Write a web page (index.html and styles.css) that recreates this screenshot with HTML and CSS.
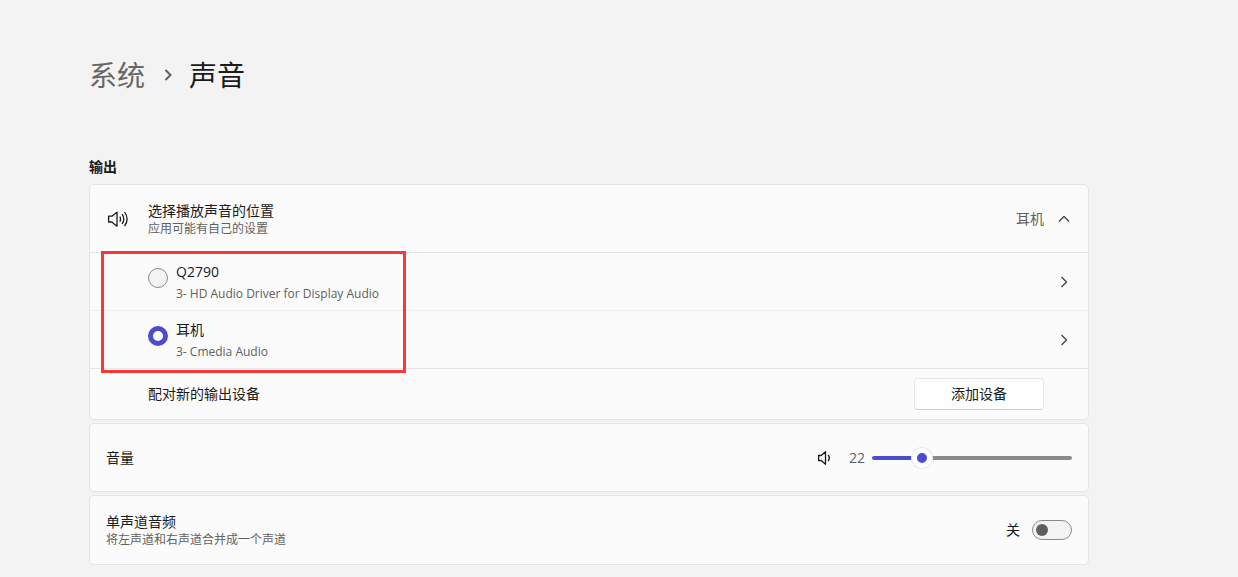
FILE: index.html
```html
<!DOCTYPE html>
<html lang="zh-CN">
<head>
<meta charset="utf-8">
<title>系统 › 声音</title>
<link rel="stylesheet" href="styles.css">
</head>
<body>
<main class="page">
  <h1 class="crumbs">
    <a class="crumb-parent" href="#">系统</a>
    <svg class="crumb-arrow" width="10" height="14" viewBox="0 0 10 14" aria-hidden="true"><path d="M2.500 2l5 5-5 5"/></svg>
    <span>声音</span>
  </h1>

  <h2 class="section-title">输出</h2>

  <div class="cards">
    <section class="card">
      <div class="row row-head">
        <svg class="icon icon-dark head-icon" width="24" height="20" viewBox="0 0 24 20" aria-hidden="true"><path d="M2.600 7.200h3.200L11 3.200v14L5.800 13H2.600zM13.800 7.600q1.500 2.500 0 5M16.200 5.200q3.200 4.900 0 9.800M18.600 3q5 7.100 0 14.200"/></svg>
        <div class="label">
          <span class="title">选择播放声音的位置</span>
          <span class="note">应用可能有自己的设置</span>
        </div>
        <span class="value">耳机</span>
        <button class="chevron" type="button" aria-label="收起"><svg class="icon" width="16" height="16" viewBox="0 0 16 16"><path d="M3 10.500l5-5 5 5"/></svg></button>
      </div>

      <div class="devices">
        <div class="row row-device">
          <input class="radio" type="radio" name="device" id="device-1">
          <label class="device" for="device-1">
            <span class="title">Q2790</span>
            <span class="detail">3- HD Audio Driver for Display Audio</span>
          </label>
          <button class="chevron" type="button" aria-label="Q2790 属性"><svg class="icon" width="16" height="16" viewBox="0 0 16 16"><path d="M5.500 3l5 5-5 5"/></svg></button>
        </div>
        <div class="row row-device">
          <input class="radio" type="radio" name="device" id="device-2" checked>
          <label class="device" for="device-2">
            <span class="title">耳机</span>
            <span class="detail">3- Cmedia Audio</span>
          </label>
          <button class="chevron" type="button" aria-label="耳机 属性"><svg class="icon" width="16" height="16" viewBox="0 0 16 16"><path d="M5.500 3l5 5-5 5"/></svg></button>
        </div>
        <div class="highlight"></div>
      </div>

      <div class="row row-pair">
        <span class="title">配对新的输出设备</span>
        <button class="button" type="button">添加设备</button>
      </div>
    </section>

    <section class="card">
      <div class="row row-volume">
        <label class="title" for="volume">音量</label>
        <button class="mute" type="button" aria-label="静音"><svg class="icon icon-dark" width="16" height="16" viewBox="0 0 16 16"><path d="M2.600 5.500h2.600L9.500 1.700v12.600L5.200 10.500H2.600zM12 5q2.800 3 0 6"/></svg></button>
        <output class="number" for="volume">22</output>
        <input class="slider" type="range" id="volume" min="0" max="100" value="22">
      </div>
    </section>

    <section class="card">
      <div class="row row-mono">
        <label class="label" for="mono">
          <span class="title">单声道音频</span>
          <span class="note">将左声道和右声道合并成一个声道</span>
        </label>
        <span class="state">关</span>
        <input class="switch" type="checkbox" role="switch" id="mono">
      </div>
    </section>
  </div>
</main>
</body>
</html>
```

FILE: styles.css
```css
* {
  box-sizing: border-box;
}

body {
  margin: 0;
  background: #f3f3f3;
  color: #1a1a1a;
  font: 14px/20px "Open Sans", "Noto Sans CJK SC", sans-serif;
}

.page {
  max-width: 1178px;
  padding: 55px 89px 12px;
}

.crumbs {
  display: flex;
  align-items: center;
  margin: 0;
  font-size: 28px;
  line-height: 40px;
  font-weight: 400;
}

.crumb-parent {
  color: #666;
  text-decoration: none;
}

.crumb-arrow {
  margin: 0 16px 0 18px;
  fill: none;
  stroke: #606060;
  stroke-width: 2;
}

.section-title {
  margin: 62px 0 7px;
  font-size: 14px;
  line-height: 20px;
  font-weight: 600;
}

.cards {
  display: flex;
  flex-direction: column;
  gap: 3px;
}

.card {
  border: 1px solid #e5e5e5;
  border-radius: 5px;
  background: #fbfbfb;
}

.row {
  display: flex;
  align-items: center;
  padding: 0 16px;
}

.row-head {
  min-height: 68px;
  border-bottom: 1px solid #e5e5e5;
}

.head-icon {
  margin-right: 18px;
}

.label {
  display: flex;
  flex-direction: column;
}

.title {
  font-size: 14px;
  line-height: 20px;
}

.note {
  color: #606060;
  font-size: 12px;
  line-height: 16px;
}

.value {
  margin-left: auto;
  margin-right: 12px;
  color: #606060;
}

.icon {
  display: block;
  fill: none;
  stroke: #404040;
  stroke-width: 1.300;
  stroke-linejoin: round;
}

.icon-dark {
  stroke: #1a1a1a;
}

.chevron,
.mute {
  padding: 0;
  border: 0;
  background: none;
}

.devices {
  position: relative;
}

.row-device {
  min-height: 58px;
  padding-left: 58px;
  border-bottom: 1px solid #f0f0f0;
}

.row-device:nth-child(2) {
  border-bottom-color: #e5e5e5;
}

.radio {
  appearance: none;
  align-self: flex-start;
  width: 20px;
  height: 20px;
  margin: 15px 8px 0 0;
  border: 1px solid #8a8a8a;
  border-radius: 50%;
  background: #f3f3f3;
}

.radio:checked {
  border: 5px solid #4f4bcf;
  background: #fff;
}

.device {
  display: flex;
  flex: 1;
  flex-direction: column;
  gap: 4px;
}

.detail {
  color: #606060;
  font-size: 12px;
  line-height: 16px;
}

.highlight {
  position: absolute;
  top: -2px;
  bottom: -4px;
  left: 11px;
  width: 305px;
  border: 3px solid #fc3636;
  pointer-events: none;
}

.row-pair {
  min-height: 50px;
  justify-content: space-between;
  padding-left: 58px;
  padding-right: 44px;
}

.button {
  width: 130px;
  height: 32px;
  border: 1px solid #e8e8e8;
  border-bottom-color: #d0d0d0;
  border-radius: 4px;
  background: #fefefe;
  color: #1a1a1a;
  font: inherit;
}

.row-volume {
  min-height: 67px;
}

.row-mono {
  min-height: 68px;
}

.mute {
  margin-left: auto;
}

.number {
  width: 33px;
  margin-right: 7px;
  color: #606060;
  text-align: right;
}

.slider {
  appearance: none;
  width: 200px;
  height: 20px;
  margin: 0;
  background: none;
}

.slider::-webkit-slider-runnable-track {
  height: 4px;
  border-radius: 2px;
  background: linear-gradient(to right, #4f4bcf 24%, #8a8a8a 24%);
}

.slider::-webkit-slider-thumb {
  appearance: none;
  width: 20px;
  height: 20px;
  margin-top: -8px;
  border: 5px solid #fff;
  border-radius: 50%;
  background: #4f4bcf;
  box-shadow: 0 0 0 1px #e9e9e9;
}

.state {
  margin-left: auto;
  margin-right: 12px;
}

.switch {
  appearance: none;
  display: flex;
  align-items: center;
  width: 40px;
  height: 20px;
  margin: 0;
  padding: 0 3px;
  border: 1px solid #8a8a8a;
  border-radius: 10px;
  background: #f3f3f3;
}

.switch::before {
  content: "";
  width: 12px;
  height: 12px;
  border-radius: 50%;
  background: #5f5f5f;
}

.switch:checked {
  justify-content: flex-end;
}
```
